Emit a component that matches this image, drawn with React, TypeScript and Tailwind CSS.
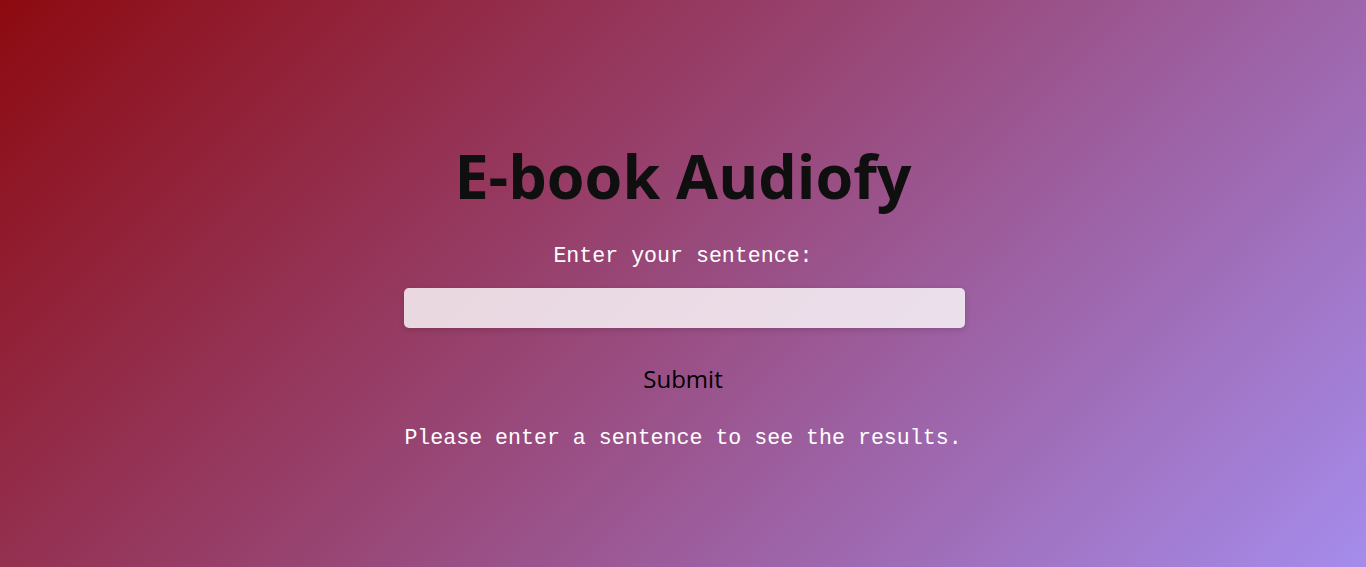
import React, { useState } from "react";

export default function App() {
  const [value, setValue] = useState("");
  return (
    <div className="w-full h-[567px] overflow-hidden flex flex-col items-center bg-[linear-gradient(135deg,#8d0a10_0%,#a58cec_100%)]">
      <h1 className="mt-[141px] h-[70px] text-[61px] leading-[70px] font-bold text-[#0f0f0f] font-['Open_Sans','Noto_Sans',sans-serif]">
        E-book Audiofy
      </h1>
      <label className="mt-[33px] h-[24px] text-[21.6px] leading-[24px] text-white font-['Liberation_Mono','Courier_New',monospace]">
        Enter your sentence:
      </label>
      <input
        value={value}
        onChange={(e) => setValue(e.target.value)}
        className="mt-[20px] ml-[2px] w-[561px] h-[40px] rounded-[5px] bg-white/80 shadow-[0_2px_6px_rgba(0,0,0,0.15)] outline-none px-3"
      />
      <button className="mt-[33px] h-[36px] text-[24px] leading-[36px] text-black bg-transparent font-['Open_Sans','Noto_Sans',sans-serif]">
        Submit
      </button>
      <p className="mt-[29px] h-[24px] text-[21.6px] leading-[24px] text-white font-['Liberation_Mono','Courier_New',monospace]">
        Please enter a sentence to see the results.
      </p>
    </div>
  );
}
